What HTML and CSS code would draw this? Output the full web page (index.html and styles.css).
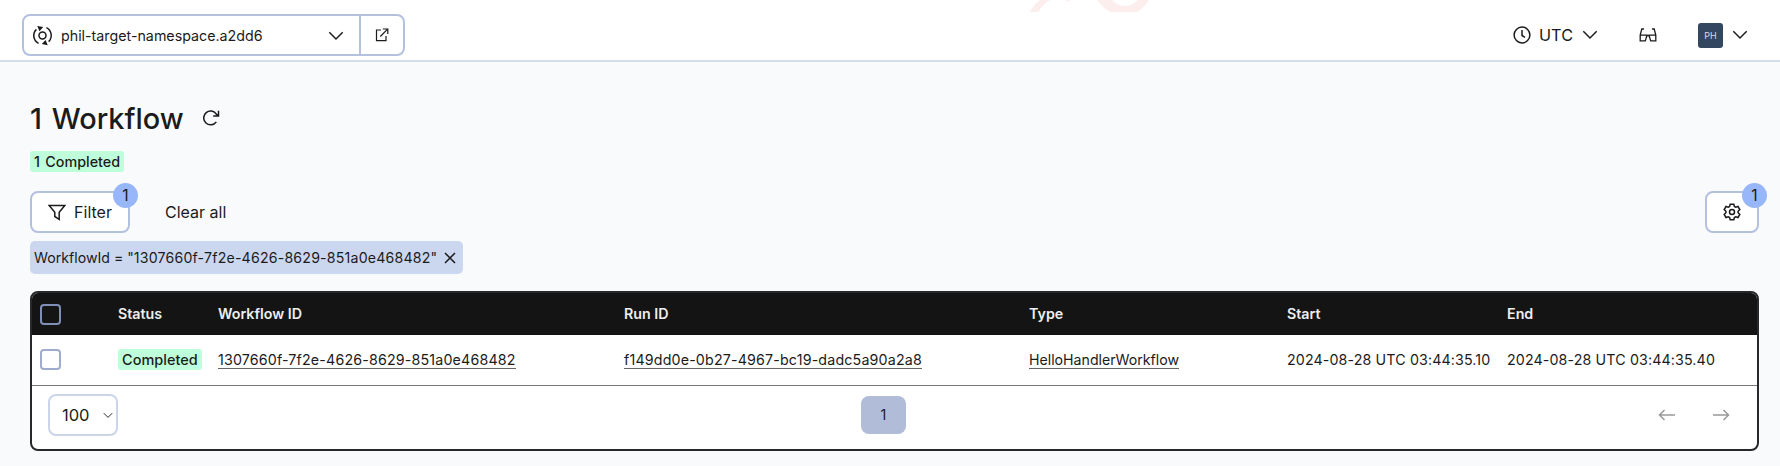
FILE: index.html
```html
<!DOCTYPE html>
<html lang="en">
<head>
<meta charset="utf-8">
<title>Workflows</title>
<link rel="stylesheet" href="styles.css">
</head>
<body>
<header class="topbar">
  <div class="namespace">
    <button class="namespace-select">
      <svg class="ns-icon" viewBox="0 0 24 24" width="21" height="21"><g fill="none" stroke="currentColor" stroke-width="1.7"><circle cx="12" cy="12" r="4"/><path d="M7.500 21A10 10 0 0 1 5 5M16.500 3A10 10 0 0 1 19 19"/></g><path d="M6 1 12.800 2.200 8.500 7ZM18 23 11.200 21.800 15.500 17Z" fill="currentColor"/></svg>
      <span class="namespace-name">phil-target-namespace.a2dd6</span>
      <svg class="chevron" viewBox="0 0 16 10" width="16" height="10"><path d="M1.3 1.3 8 8l6.700-6.700"/></svg>
    </button>
    <button class="namespace-link">
      <svg class="line link-icon" viewBox="0 0 14 14" width="14" height="14"><path d="M6 2H1.500v10.700H11V8M7.800 1H12.800V6M5.300 8.500 12.600 1.200"/></svg>
    </button>
  </div>
  <svg class="watermark" viewBox="0 0 130 12" width="130" height="12"><g fill="#fdeeee"><path d="M0 12Q4 4 10 0H20Q12 5 8.500 12ZM67 0H82Q88 6 95 6T108 0H119Q114 8 107 12H80Q72 7 67 0Z"/><path d="M35 0h5l-2 1.500Z"/></g></svg>
  <div class="tools">
    <button class="timezone">
      <svg class="line" viewBox="0 0 18 18" width="18" height="18"><circle cx="9" cy="9" r="7.900"/><path d="M9 4v5.500l3 1.800"/></svg>
      <span>UTC</span>
      <svg class="chevron" viewBox="0 0 16 10" width="16" height="10"><path d="M1.300 1.300 8 8l6.700-6.700"/></svg>
    </button>
    <svg class="line glasses" viewBox="0 0 18 14" width="18" height="14"><path d="M5 1H2.800L1.200 7.200V12.900H6.300L8 7.200H1.200M13 1h2.200l1.600 6.200v5.700H11.700L10 7.200h6.800M7.500 7.800h3"/></svg>
    <button class="account">
      <span class="avatar">PH</span>
      <svg class="chevron" viewBox="0 0 16 10" width="16" height="10"><path d="M1.300 1.300 8 8l6.700-6.700"/></svg>
    </button>
  </div>
</header>
<main class="content">
  <div class="heading">
    <h1 class="title">1 Workflow</h1>
    <svg class="line" viewBox="0 0 17 16" width="17" height="16"><path d="M13.300 11.800A6.900 6.900 0 1 1 13.500 4.300L15.500 6M15.500.8V6H10.200"/></svg>
  </div>
  <div class="counts"><span class="status count-status">1 Completed</span></div>
  <div class="actions">
    <button class="button filter">
      <svg class="line" viewBox="0 0 18 17" width="18" height="17"><path d="M1.200 1.500H16.800L11.200 8.300V15.300L6.800 12.500V8.300Z"/></svg>
      <span>Filter</span><span class="badge">1</span>
    </button>
    <button class="clear">Clear all</button>
    <button class="button settings">
      <svg class="line" viewBox="0 0 18 18" width="18" height="18"><path d="M7.200 1.200h3.600l.6 2.300 1.300.7 2.300-.7 1.800 3.100-1.700 1.700v1.400l1.700 1.700-1.800 3.100-2.300-.7-1.300.7-.6 2.300H7.200l-.6-2.300-1.300-.7-2.300.7-1.800-3.100 1.700-1.700V8.300L1.200 6.600 3 3.500l2.300.7 1.300-.7Z"/><circle cx="9" cy="9" r="2.500"/></svg>
      <span class="badge">1</span>
    </button>
  </div>
  <div class="chip"><span>WorkflowId = "<span class="id">1307660f-7f2e-4626-8629-851a0e468482</span>"</span>
    <svg class="line" viewBox="0 0 12 12" width="12" height="12"><path d="M1 1 11 11M11 1 1 11"/></svg>
  </div>
  <section class="table">
    <div class="row head">
      <span class="checkbox"></span><span>Status</span><span>Workflow ID</span><span>Run ID</span><span>Type</span><span>Start</span><span>End</span>
    </div>
    <div class="row body">
      <span class="checkbox"></span>
      <span><span class="status">Completed</span></span>
      <span><a class="link id">1307660f-7f2e-4626-8629-851a0e468482</a></span>
      <span><a class="link id">f149dd0e-0b27-4967-bc19-dadc5a90a2a8</a></span>
      <span><a class="link type">HelloHandlerWorkflow</a></span>
      <span class="time">2024-08-28 UTC 03:44:35.10</span>
      <span class="time">2024-08-28 UTC 03:44:35.40</span>
    </div>
    <div class="pagination">
      <div class="page-size"><span>100</span><svg class="chevron" viewBox="0 0 16 10" width="10" height="7"><path d="M1.300 1.300 8 8l6.700-6.700"/></svg></div>
      <span class="page">1</span>
      <div class="arrows">
        <svg class="line" viewBox="0 0 18 12" width="18" height="12"><path d="M17 6H1.500M6.500 1l-5 5 5 5"/></svg>
        <svg class="line" viewBox="0 0 18 12" width="18" height="12"><path d="M1 6h15.500M11.500 1l5 5-5 5"/></svg>
      </div>
    </div>
  </section>
</main>
</body>
</html>
```
FILE: styles.css
```css
* { box-sizing: border-box; }
body { margin: 0; height: 466px; overflow: hidden; background: #f9fafc; color: #1b1b1b; font: 14.25px/20px Inter, "Liberation Sans", sans-serif; }
button { font: inherit; color: inherit; background: none; border: 0; padding: 0; margin: 0; display: flex; align-items: center; }
svg { display: block; flex: none; }
.line, .chevron { fill: none; stroke: currentColor; stroke-width: 1.5; }
.topbar { position: relative; height: 62px; padding: 14px 32px 5px 22px; display: flex; align-items: flex-start; justify-content: space-between; background: #fff; border-bottom: 2px solid #d4dbea; }
.namespace { display: flex; width: 383px; height: 42px; border: 2px solid #b3c1df; border-radius: 8px; }
.namespace-select { flex: 1; padding: 1px 15px 0 8px; }
.namespace-name { margin-left: 8px; flex: 1; text-align: left; }
.namespace-link { width: 44px; border-left: 2px solid #b3c1df; justify-content: center; }
.link-icon { stroke-width: 1.2; }
.watermark { position: absolute; left: 1030px; top: 0; }
.tools { display: flex; align-items: center; height: 42px; font-size: 16.25px; }
.timezone { gap: 8px; }
.timezone .chevron { margin-left: 1px; }
.glasses { margin: 0 41px 0 41px; stroke-width: 1.3; }
.account { gap: 9px; }
.avatar { width: 25px; height: 25px; border-radius: 3px; background: #334760; color: #d7dce3; font-size: 9px; line-height: 25px; text-align: center; }
.content { padding: 39px 21px 0 30px; }
.heading { display: flex; align-items: center; gap: 19px; height: 36px; }
.heading .line { margin-top: -2px; }
.title { margin: 0; font-size: 28.9px; line-height: 36px; font-weight: 500; word-spacing: 2px; }
.counts { display: flex; margin-top: 14px; }
.status { display: inline-block; height: 21px; padding: 0 4px; border-radius: 3px; background: #bffedb; font-size: 14.5px; font-weight: 500; line-height: 21px; }
.count-status { font-size: 14.35px; word-spacing: 1.5px; }
.actions { display: flex; margin-top: 19px; font-size: 16px; }
.button { position: relative; height: 42px; border: 2px solid #b3c1df; border-radius: 8px; background: #fff; justify-content: center; }
.filter { width: 100px; gap: 8px; }
.badge { position: absolute; top: -10px; right: -10px; width: 25px; height: 25px; border-radius: 50%; background: #98b6fa; font-size: 15.5px; line-height: 25px; text-align: center; }
.clear { margin-left: 35px; }
.settings { width: 54px; margin-left: auto; }
.chip { display: flex; align-items: center; justify-content: space-between; width: 433px; height: 33px; margin-top: 8px; padding: 0 7px 0 4px; border-radius: 5px; background: #cbd7ee; white-space: nowrap; font-size: 14.15px; }
.chip .id { letter-spacing: .2px; }
.table { height: 160px; margin-top: 17px; border: 2px solid #262829; border-radius: 8px; background: #fff; overflow: hidden; }
.row { display: grid; grid-template-columns: 78px 100px 406px 405px 258px 220px 1fr; align-items: center; padding-left: 8px; white-space: nowrap; }
.head { height: 42px; background: #141414; color: #eee; font-weight: 600; }
.body { height: 51px; padding-bottom: 1px; border-bottom: 1px solid #777; }
.checkbox { width: 21px; height: 21px; border: 2px solid #9facce; border-radius: 4px; }
.head .checkbox { border-color: #7f8fb5; }
.link { border-bottom: 1px solid #666; display: inline-block; line-height: 17px; }
.id { letter-spacing: .16px; }
.type { font-size: 14.15px; }
.time { letter-spacing: .12px; }
.pagination { display: grid; grid-template-columns: 813px 45px 1fr; align-items: start; padding: 8px 27px 0 16px; }
.page-size { display: flex; align-items: center; justify-content: space-between; width: 70px; height: 42px; padding: 0 3px 0 12px; border: 2px solid #cbd5ea; border-radius: 8px; font-size: 16.5px; }
.page { height: 38px; margin-top: 2px; border-radius: 8px; background: #b1bdd8; line-height: 38px; text-align: center; }
.arrows { display: flex; justify-content: flex-end; gap: 36px; padding-top: 15px; color: #999; }
```
